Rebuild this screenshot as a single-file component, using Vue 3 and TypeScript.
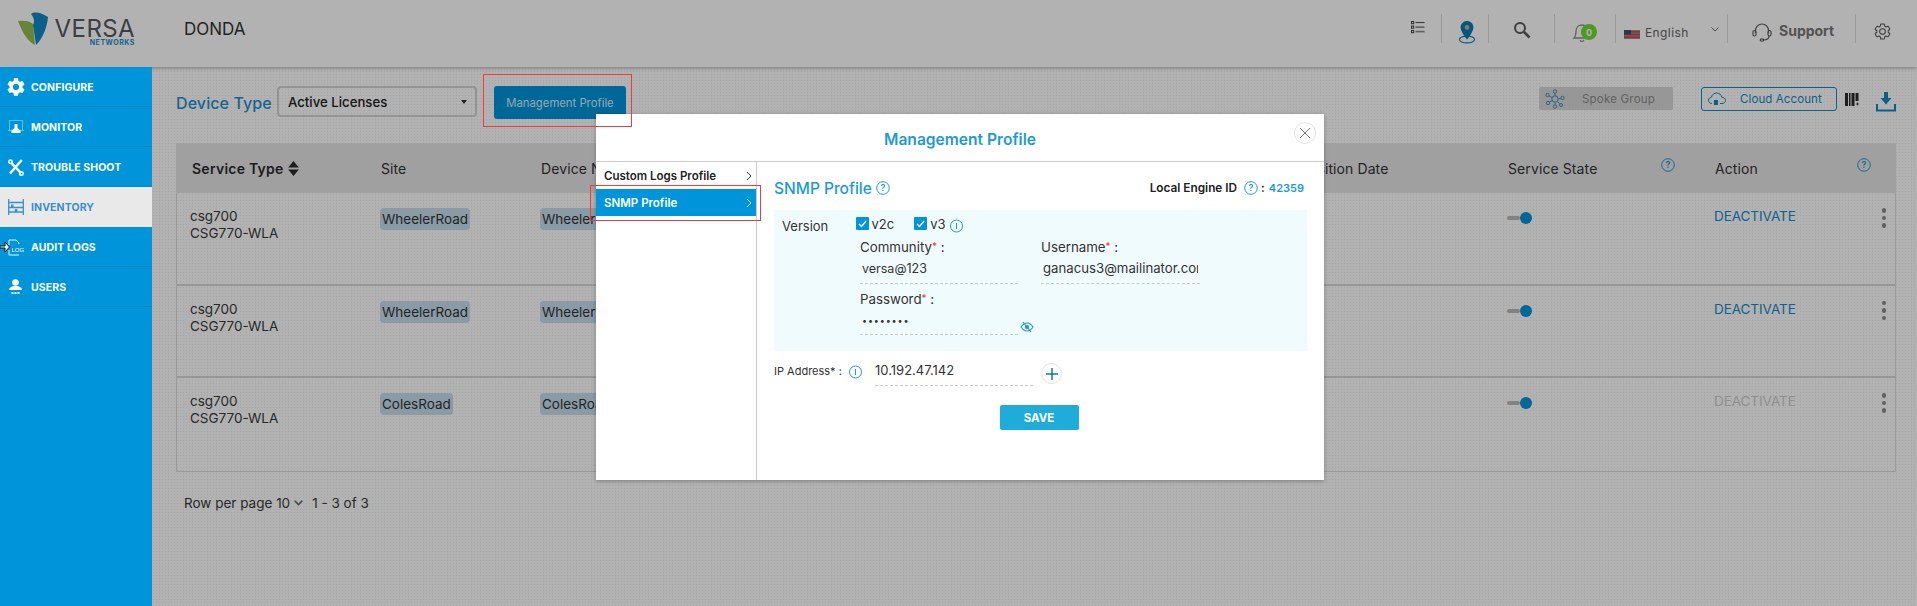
<script setup lang="ts">
interface Row { model: string; site: string; action: boolean }
const nav = [
  { key: 'configure', label: 'CONFIGURE' },
  { key: 'monitor', label: 'MONITOR' },
  { key: 'trouble', label: 'TROUBLE SHOOT' },
  { key: 'inventory', label: 'INVENTORY' },
  { key: 'audit', label: 'AUDIT LOGS' },
  { key: 'users', label: 'USERS' }
]
const rows: Row[] = [
  { model: 'CSG770-WLA', site: 'WheelerRoad', action: true },
  { model: 'CSG770-WLA', site: 'WheelerRoad', action: true },
  { model: 'CSG770-WLA', site: 'ColesRoad', action: false }
]
const gear = 'M19.14 12.94c.04-.3.06-.61.06-.94 0-.32-.02-.64-.07-.94l2.03-1.58a.49.49 0 0 0 .12-.61l-1.92-3.32a.488.488 0 0 0-.59-.22l-2.39.96c-.5-.38-1.03-.7-1.62-.94l-.36-2.54a.484.484 0 0 0-.48-.41h-3.84c-.24 0-.43.17-.47.41l-.36 2.54c-.59.24-1.13.57-1.62.94l-2.39-.96c-.22-.08-.47 0-.59.22L2.74 8.87c-.12.21-.08.47.12.61l2.03 1.58c-.05.3-.09.63-.09.94s.02.64.07.94l-2.03 1.58a.49.49 0 0 0-.12.61l1.92 3.32c.12.22.37.29.59.22l2.39-.96c.5.38 1.03.7 1.62.94l.36 2.54c.05.24.24.41.48.41h3.84c.24 0 .44-.17.47-.41l.36-2.54c.59-.24 1.13-.56 1.62-.94l2.39.96c.22.08.47 0 .59-.22l1.92-3.32c.12-.22.07-.47-.12-.61l-2.01-1.58zM12 15.6c-1.98 0-3.6-1.62-3.6-3.6s1.62-3.6 3.6-3.6 3.6 1.62 3.6 3.6-1.62 3.6-3.6 3.6z'
</script>

<template>
  <div class="page">
    <header class="topbar">
      <div class="logo">
        <svg class="logo-mark" width="31" height="34" viewBox="0 0 31 34">
          <path d="M0 9 C6 8 12 9 15 12 L17 33 C10 30 4 20 0 9Z" fill="#93bf4e" />
          <path d="M13 2 C17 -1 24 1 30 5 C29 16 24 28 18 33 C17 26 16 19 15 13 C17 9 16 6 13 2Z" fill="#0e8ac6" />
        </svg>
        <div class="logo-text">
          <span class="logo-versa">VERSA</span>
          <span class="logo-net">NETWORKS</span>
        </div>
      </div>
      <div class="tenant">DONDA</div>
      <div class="top-tools">
        <div class="tool t-list">
          <svg width="14" height="13" viewBox="0 0 14 13" fill="none" stroke="#444" stroke-width="1">
            <rect x=".5" y=".5" width="2.2" height="2.2" /><rect x=".5" y="5" width="2.2" height="2.2" /><rect x=".5" y="9.5" width="2.2" height="2.2" />
            <path d="M4.5 1.6H13.5M4.5 6.1H13.5" /><path d="M4.5 10.6H13.5" stroke="#888" stroke-width="1.6" />
          </svg>
        </div>
        <div class="tool t-pin">
          <svg width="18" height="24" viewBox="0 0 18 24">
            <ellipse cx="9" cy="19.5" rx="7.6" ry="3.4" fill="none" stroke="#0e7bb0" stroke-width="1.1" />
            <path d="M9 1C5 1 2.6 4 2.6 7.4 2.6 11.6 9 19.5 9 19.5S15.4 11.6 15.4 7.4C15.4 4 13 1 9 1Z" fill="#0e7bb0" />
            <circle cx="9" cy="7.4" r="2.3" fill="#b3b3b3" />
          </svg>
        </div>
        <div class="tool t-search">
          <svg width="18" height="18" viewBox="0 0 18 18" fill="none" stroke="#5a5a5a">
            <circle cx="7" cy="7" r="5" stroke-width="2" /><path d="M11 11l5.5 5.5" stroke-width="2.6" />
          </svg>
        </div>
        <div class="tool t-bell">
          <svg width="22" height="22" viewBox="0 0 22 22" fill="none" stroke="#8d8d8d" stroke-width="1.3">
            <path d="M3 17c2-2 2-4 2-7 0-3.5 2.5-6 6-6s6 2.500 6 6c0 3 0 5 2 7z" /><path d="M9 19.500c1 1 3 1 4 0" />
          </svg>
          <span class="badge">0</span>
        </div>
        <div class="tool t-lang">
          <svg class="flag" width="16" height="9" viewBox="0 0 16 9">
            <rect width="16" height="9" fill="#b8878a" />
            <path d="M0 1.800H16M0 4.500H16M0 7.200H16" stroke="#a84a4c" stroke-width="1.300" />
            <rect width="7" height="4.500" fill="#4a4a72" />
          </svg>
          <span class="lang-text">English</span>
          <svg class="lang-chev" width="8" height="5" viewBox="0 0 8 5" fill="none" stroke="#666" stroke-width="1">
            <path d="M.5.5 4 4 7.500.5" />
          </svg>
        </div>
        <div class="tool t-support">
          <svg width="20" height="20" viewBox="0 0 20 20" fill="none" stroke="#5c5c5c" stroke-width="1.200">
            <path d="M3.500 11V8.500a6.500 6.500 0 0 1 13 0V11" />
            <rect x="1" y="8.500" width="3" height="5.500" rx="1.500" /><rect x="16" y="8.500" width="3" height="5.500" rx="1.500" />
            <path d="M17 14c0 3-3 4-6 4" /><ellipse cx="10" cy="18" rx="1.800" ry="1.100" />
          </svg>
          <span class="support-text">Support</span>
        </div>
        <div class="tool t-gear">
          <svg width="19" height="19" viewBox="0 0 24 24" fill="none" stroke="#555" stroke-width="1.300"><path :d="gear" /></svg>
        </div>
      </div>
    </header>

    <div class="body">
      <aside class="sidebar">
        <div v-for="n in nav" :key="n.key" class="nav-item" :class="{ active: n.key === 'inventory' }">
          <span class="nav-icon">
            <svg v-if="n.key === 'configure'" width="18" height="18" viewBox="2 2 20 20" fill="#fff"><path :d="gear" /></svg>
            <svg v-else-if="n.key === 'monitor'" width="16" height="15" viewBox="0 0 16 15">
              <rect x="1.500" y=".5" width="13" height="10" fill="none" stroke="#7cc8ec" stroke-width=".8" />
              <path d="M0 10.500h2M14 10.500h2" stroke="#7cc8ec" stroke-width=".8" />
              <path d="M6.500 4h3v4l3 2.500v2.500h-9V10.500l3-2.500z" fill="#fff" />
            </svg>
            <svg v-else-if="n.key === 'trouble'" width="16" height="17" viewBox="0 0 16 17" fill="none" stroke="#fff">
              <path d="M13.800 1L2 14.500" stroke-width="2.400" /><circle cx="2.500" cy="2.800" r="1.700" stroke-width="1.500" />
              <path d="M3.500 4.200L13 14" stroke-width="2.400" /><circle cx="13.300" cy="14.500" r="1.800" stroke-width="1.500" />
            </svg>
            <svg v-else-if="n.key === 'inventory'" width="16" height="16" viewBox="0 0 16 16" fill="none" stroke="#3b8fd0" stroke-width="1.300">
              <path d="M.7 0V16M15.300 0V16M.7 3.500H15.300M.7 8.500H15.300M.7 13H15.300" />
              <rect x="3" y="5.500" width="2.500" height="3" fill="#3b8fd0" stroke="none" /><rect x="6.800" y="10" width="2.500" height="3" fill="#3b8fd0" stroke="none" />
            </svg>
            <svg v-else-if="n.key === 'audit'" width="16" height="17" viewBox="0 0 16 17">
              <path d="M1 6V1h7l3 3v1M1 11v5h10" fill="none" stroke="#fff" stroke-width=".9" />
              <text x="3.500" y="12.500" class="log-text">LOG</text>
            </svg>
            <svg v-else width="15" height="16" viewBox="0 0 15 16" fill="#fff">
              <circle cx="7.500" cy="3.500" r="3.300" /><path d="M1 11c0-2.500 3-4 6.500-4s6.500 1.500 6.500 4z" />
              <rect x="3.500" y="13" width="2" height="2" /><rect x="6.500" y="13" width="2" height="2" /><rect x="9.500" y="13" width="2" height="2" />
            </svg>
          </span>
          <span class="nav-label">{{ n.label }}</span>
        </div>
        <svg class="cursor" width="10" height="12" viewBox="0 0 10 12">
          <path d="M0 5h5V1l4.500 5L5 11V7H0z" fill="#fff" stroke="#111" stroke-width="1" />
        </svg>
      </aside>

      <main class="main">
        <div class="toolbar">
          <span class="dt-label">Device Type</span>
          <div class="select">
            <span>Active Licenses</span>
            <i class="caret"></i>
          </div>
          <button class="mp-btn">Management Profile</button>
          <div class="spacer"></div>
          <div class="spoke">
            <svg width="20" height="20" viewBox="0 0 20 20" fill="none" stroke="#3f93bd" stroke-width="1">
              <circle cx="10" cy="10" r="3.200" /><circle cx="10" cy="2.500" r="1.700" /><circle cx="10" cy="17.500" r="1.700" />
              <circle cx="2.500" cy="6" r="1.700" /><circle cx="17.500" cy="9" r="1.700" /><circle cx="3" cy="14" r="1.700" /><circle cx="16" cy="16" r="1.500" />
              <path d="M10 4.200V6.800M10 13.200V15.800M4 7l3.300 1.500M13.200 9.700h2.600M4.500 13l2.900-1.500M12.500 12.500l2.300 2.400" />
            </svg>
            <span>Spoke Group</span>
          </div>
          <div class="cloud">
            <svg width="18" height="14" viewBox="0 0 18 14" fill="none" stroke="#0e8ac6" stroke-width="1">
              <path d="M4 11.500C2 11.500.5 10 .5 8.200.5 6.500 1.800 5.300 3.400 5.200 4 2.500 6.300 1 8.700 1c2.600 0 4.700 1.800 5 4.200 2 .1 3.800 1.200 3.800 3.200S16 11.500 14 11.500h-2" />
              <rect x="6.500" y="8.500" width="3" height="4" fill="#0e8ac6" />
            </svg>
            <span>Cloud Account</span>
          </div>
          <svg class="barcode" width="14" height="15" viewBox="0 0 14 15" fill="#2c2c2c">
            <rect x="0" y="1" width="3" height="13" /><rect x="4" y="1" width="1.500" height="13" /><rect x="6.500" y="1" width="3" height="13" />
            <rect x="10.500" y="1" width="3" height="8" /><path d="M11 12h3M12.500 10.500v3" stroke="#2c2c2c" stroke-width=".8" />
          </svg>
          <svg class="download" width="20" height="20" viewBox="0 0 20 20" fill="#0e8ac6">
            <path d="M8 0h4v6h3.500L10 12.500 4.500 6H8z" />
            <path d="M1 12v6.500h18V12" fill="none" stroke="#0e8ac6" stroke-width="2" />
          </svg>
        </div>

        <section class="table">
          <div class="grid thead">
            <div class="th-service">Service Type
              <svg width="13" height="15" viewBox="0 0 12 14" fill="#2c2c2c"><path d="M6 0l5 6H1zM6 14l5-6H1z" /></svg>
            </div>
            <div class="th-c">Site</div>
            <div class="th-c">Device Name</div>
            <div class="th-c">Acquisition Date</div>
            <div class="th-c th-help">Service State
              <svg class="help" width="14" height="14" viewBox="0 0 14 14" fill="none" stroke="#1d9ad6"><circle cx="7" cy="7" r="6.300" /><text x="7" y="10" class="q-text">?</text></svg>
            </div>
            <div class="th-c th-help">Action
              <svg class="help help-a" width="14" height="14" viewBox="0 0 14 14" fill="none" stroke="#1d9ad6"><circle cx="7" cy="7" r="6.300" /><text x="7" y="10" class="q-text">?</text></svg>
            </div>
          </div>
          <div v-for="(r, i) in rows" :key="i" class="grid trow">
            <div class="td-model"><div>csg700</div><div>{{ r.model }}</div></div>
            <div><span class="chip">{{ r.site }}</span></div>
            <div><span class="chip">{{ r.site }}</span></div>
            <div></div>
            <div class="td-toggle"><span class="track"></span><span class="knob"></span></div>
            <div class="td-action">
              <span class="deact" :class="{ off: !r.action }">DEACTIVATE</span>
              <span class="dots"><i></i><i></i><i></i></span>
            </div>
          </div>
        </section>

        <div class="pager">
          <span>Row per page 10</span>
          <svg width="9" height="6" viewBox="0 0 9 6" fill="none" stroke="#666" stroke-width="1.600"><path d="M.7.7 4.500 4.500 8.300.7" /></svg>
          <span class="pager-range">1 - 3 of 3</span>
        </div>
      </main>
    </div>

    <div class="overlay"></div>

    <div class="modal">
      <div class="modal-head">
        <span class="modal-title">Management Profile</span>
        <span class="close">
          <svg width="12" height="12" viewBox="0 0 12 12" stroke="#777" stroke-width="1"><path d="M1 1l10 10M11 1L1 11" /></svg>
        </span>
      </div>
      <div class="modal-body">
        <div class="tabs">
          <div class="tab">Custom Logs Profile
            <svg width="6" height="10" viewBox="0 0 6 10" fill="none" stroke="#333"><path d="M1 1l4 4-4 4" /></svg>
          </div>
          <div class="tab tab-on">SNMP Profile
            <svg width="6" height="10" viewBox="0 0 6 10" fill="none" stroke="#d6f0fb"><path d="M1 1l4 4-4 4" /></svg>
          </div>
        </div>
        <div class="content">
          <div class="c-head">
            <span class="c-title">SNMP Profile</span>
            <svg class="ic" width="14" height="14" viewBox="0 0 14 14" fill="none" stroke="#1d9ad6"><circle cx="7" cy="7" r="6.300" /><text x="7" y="10" class="q-text b">?</text></svg>
            <div class="spacer"></div>
            <span class="engine">Local Engine ID</span>
            <svg class="ic eng-ic" width="14" height="14" viewBox="0 0 14 14" fill="none" stroke="#1d9ad6"><circle cx="7" cy="7" r="6.300" /><text x="7" y="10" class="q-text b">?</text></svg>
            <span class="engine colon">:</span>
            <span class="engine-id">42359</span>
          </div>
          <div class="panel">
            <div class="ver-row">
              <span class="ver-label">Version</span>
              <span class="check"><svg width="9" height="8" viewBox="0 0 9 8" fill="none" stroke="#fff" stroke-width="1.300"><path d="M1 4l2.500 2.500L8 1" /></svg></span>
              <span class="ck-text">v2c</span>
              <span class="check ck2"><svg width="9" height="8" viewBox="0 0 9 8" fill="none" stroke="#fff" stroke-width="1.300"><path d="M1 4l2.500 2.500L8 1" /></svg></span>
              <span class="ck-text">v3</span>
              <svg class="ic-i" width="13" height="14" viewBox="0 0 13 14" fill="none" stroke="#1d9ad6"><circle cx="6.500" cy="7" r="6" /><path d="M6.500 4v6" /></svg>
            </div>
            <div class="fields">
              <div class="field">
                <label class="f-label">Community<em>*</em> :</label>
                <div class="f-value">versa@123</div>
              </div>
              <div class="field">
                <label class="f-label">Username<em>*</em> :</label>
                <div class="f-value clip"><span>ganacus3@mailinator.com</span></div>
              </div>
              <div class="field">
                <label class="f-label">Password<em>*</em> :</label>
                <div class="f-value pw">••••••••</div>
                <svg class="eye" width="14" height="12" viewBox="0 0 14 12" fill="none" stroke="#1d9ad6" stroke-width="1.200">
                  <path d="M1 6c2-3 4-4 6-4s4 1 6 4c-2 3-4 4-6 4S3 9 1 6z" /><circle cx="7" cy="6" r="1.500" fill="#1d9ad6" /><path d="M3 1l8 10" />
                </svg>
              </div>
            </div>
          </div>
          <div class="ip-row">
            <span class="ip-label">IP Address* :</span>
            <svg class="ic-i" width="13" height="14" viewBox="0 0 13 14" fill="none" stroke="#1d9ad6"><circle cx="6.500" cy="7" r="6" /><path d="M6.500 4v6" /></svg>
            <div class="ip-value">10.192.47.142</div>
            <span class="plus">
              <svg width="12" height="12" viewBox="0 0 12 12" stroke="#1078aa" stroke-width="1.500"><path d="M6 0v12M0 6h12" /></svg>
            </span>
          </div>
          <div class="save-wrap"><button class="save">SAVE</button></div>
        </div>
      </div>
    </div>

    <div class="mark mark-btn"></div>
    <div class="mark mark-tab"></div>
  </div>
</template>

<style>
html, body { margin: 0; padding: 0; background: #fff; overflow: hidden; }
</style>

<style scoped>
* { box-sizing: border-box; }
.page { position: relative; width: 1917px; height: 606px; overflow: hidden; font-family: Inter, "Open Sans", sans-serif; color: #333; background: #fff; }
.spacer { flex: 1; }

.topbar { height: 67px; display: flex; align-items: flex-start; background: #fff; box-shadow: 0 1px 4px rgba(0,0,0,.3); position: relative; }
.logo { width: 184px; display: flex; padding: 12px 0 0 18px; }
.logo-mark { flex: none; }
.logo-text { display: flex; flex-direction: column; align-items: flex-end; margin-left: 5px; width: 81px; }
.logo-versa { font-size: 24px; line-height: 19px; letter-spacing: .4px; color: #565a61; margin-top: 7px; }
.logo-net { font-size: 7px; font-weight: 700; line-height: 8px; letter-spacing: .55px; color: #1c90c9; margin-top: 1px; }
.tenant { font-size: 17px; line-height: 20px; margin-top: 19px; color: #333; width: 1227px; }
.top-tools { flex: 1; display: flex; align-items: flex-start; height: 100%; }
.tool { height: 29px; margin-top: 14px; border-right: 1px solid #ddd; position: relative; display: flex; align-items: center; flex: none; }
.t-list { width: 31px; padding-left: 0; }
.t-list svg { margin-top: -2px; }
.t-pin { width: 47px; padding-left: 16px; }
.t-pin svg { margin-top: 7px; }
.t-search { width: 66px; padding-left: 24px; }
.t-search svg { margin-top: 3px; }
.t-bell { width: 61px; padding-left: 16px; }
.t-bell svg { margin-top: 7px; }
.badge { position: absolute; left: 26px; top: 10px; width: 16px; height: 16px; border-radius: 50%; background: #6fdc32; color: #fff; font-size: 9px; font-weight: 700; display: flex; align-items: center; justify-content: center; }
.t-lang { width: 112px; padding-left: 8px; }
.t-lang .flag { margin-top: 12px; }
.lang-text { font-size: 12px; margin-left: 5px; margin-top: 8px; color: #666; width: 65px; letter-spacing: .4px; }
.t-lang .lang-chev { margin-top: 2px; margin-left: 1px; }
.t-support { width: 128px; padding-left: 24px; }
.t-support svg { margin-top: 7px; }
.support-text { font-size: 14px; font-weight: 700; color: #777; margin-left: 7px; margin-top: 3px; }
.t-gear { border: 0; padding-left: 17px; }
.t-gear svg { margin-top: 5px; }

.body { display: flex; height: 539px; }
.sidebar { position: relative; z-index: 5; width: 152px; flex: none; background: #0095da; }
.nav-item { height: 40px; display: flex; align-items: center; border-bottom: 1px solid #0a85c2; color: #fff; padding-top: 1px; }
.nav-item.active { background: #e9e9e9; color: #3b8fd0; border-bottom-color: #e9e9e9; }
.nav-icon { width: 31px; flex: none; display: flex; justify-content: center; padding-left: 0; }
.nav-label { font-size: 10.500px; font-weight: 700; letter-spacing: .1px; }
.log-text { font-size: 6px; fill: #fff; font-family: "Liberation Sans", sans-serif; }
.cursor { position: absolute; left: 0; top: 174px; }

.main { flex: 1; padding: 19px 21px 0 24px; background-color: #fff; background-image: radial-gradient(#eeeeee .5px, transparent .8px); background-size: 3px 3px; min-width: 0; }
.toolbar { display: flex; align-items: flex-start; height: 33px; }
.dt-label { font-size: 16px; font-weight: 500; color: #1a93cf; margin-top: 7px; width: 101px; letter-spacing: .1px; }
.select { width: 200px; height: 31px; border: 2px solid #d5d5d5; border-radius: 4px; display: flex; align-items: center; justify-content: space-between; padding: 0 8px 0 9px; font-size: 13.200px; font-weight: 500; color: #222; }
.caret { width: 0; height: 0; border-left: 3px solid transparent; border-right: 3px solid transparent; border-top: 4px solid #333; }
.mp-btn { margin-left: 17px; width: 132px; height: 33px; border: 0; border-radius: 3px; background: #0095da; color: #d8eef8; font-family: inherit; font-size: 11.300px; padding: 0; }
.spoke { margin-top: 1px; width: 134px; height: 23px; background: #d8d8d8; border-radius: 2px; display: flex; align-items: center; padding-left: 6px; font-size: 11.500px; color: #8d8d8d; letter-spacing: .2px; }
.spoke span { margin-left: 17px; }
.cloud { margin: 1px 0 0 28px; width: 136px; height: 24px; border: 1px solid #0e8ac6; border-radius: 3px; display: flex; align-items: center; padding-left: 6px; font-size: 11.500px; color: #0e8ac6; letter-spacing: .1px; }
.cloud span { margin-left: 14px; }
.barcode { margin: 6px 0 0 8px; }
.download { margin: 6px 0 0 17px; flex: none; }

.table { margin-top: 24px; border: 1px solid #ddd; border-top: 0; width: 1720px; }
.grid { display: grid; grid-template-columns: 203px 160px 738px 229px 207px 1fr; }
.thead { height: 50px; background: #e5e5e5; align-items: center; font-size: 14px; color: #333; margin-left: -1px; margin-right: -1px; }
.th-service { padding-left: 16px; font-weight: 600; color: #2c2c2c; display: flex; align-items: center; gap: 3px; letter-spacing: .25px; }
.th-c { padding-left: 2px; letter-spacing: .1px; }
.th-help { position: relative; }
.help { position: absolute; left: 155px; top: -2px; }
.help-a { left: 144px; }
.q-text { font-size: 9px; fill: #1d9ad6; stroke: none; text-anchor: middle; font-weight: 600; }
.trow { height: 92.500px; border-bottom: 2px solid #d8d8d8; font-size: 13.500px; color: #333; padding-top: 15px; }
.trow:last-child { border-bottom: 0; }
.td-model { padding-left: 13px; line-height: 17px; color: #3a3a3a; }
.chip { display: inline-block; background: #c6dfee; border-radius: 4px; height: 22px; line-height: 22px; padding: 0 2px; color: #333; }
.td-toggle { position: relative; height: 12px; margin-top: 4px; }
.track { position: absolute; left: 0; top: 4px; width: 13px; height: 4px; border-radius: 2px; background: #bbb; }
.knob { position: absolute; left: 13px; top: 0; width: 12px; height: 12px; border-radius: 50%; background: #0095da; }
.td-action { display: flex; justify-content: space-between; padding-right: 9px; font-size: 13.500px; }
.deact { color: #0f8fcf; letter-spacing: -.05px; }
.deact.off { color: #cfcfcf; }
.dots { display: flex; flex-direction: column; gap: 3px; }
.dots i { width: 4.500px; height: 4.500px; border-radius: 50%; background: #8c8c8c; display: block; }
.pager { margin: 23px 0 0 8px; display: flex; align-items: center; font-size: 13.500px; color: #3a3a3a; }
.pager svg { margin-left: 4px; }
.pager-range { margin-left: 9px; }

.overlay { position: absolute; inset: 0; background: rgba(0,0,0,.3); z-index: 2; }

.modal { position: absolute; left: 596px; top: 114px; width: 728px; height: 366px; background: #fff; z-index: 6; display: flex; flex-direction: column; box-shadow: 0 1px 4px rgba(0,0,0,.3); }
.modal-head { height: 48px; border-bottom: 1px solid #ccc; display: flex; align-items: center; justify-content: center; position: relative; }
.modal-title { font-size: 15.600px; font-weight: 600; color: #1d9ad6; margin-top: 3px; }
.close { position: absolute; right: 8px; top: 8px; width: 22px; height: 22px; border-radius: 50%; border: 1px solid #e4e4e4; display: flex; align-items: center; justify-content: center; }
.modal-body { flex: 1; display: flex; min-height: 0; }
.tabs { width: 161px; flex: none; border-right: 1px solid #ccc; }
.tab { height: 27px; display: flex; align-items: center; justify-content: space-between; padding: 0 4px 0 8px; font-size: 11.500px; font-weight: 600; color: #222; }
.tab-on { background: #0095da; color: #fff; }
.content { flex: 1; padding: 16px 20px 0 17px; min-width: 0; }
.c-head { display: flex; align-items: center; height: 20px; }
.c-title { font-size: 15.500px; font-weight: 500; color: #1d9ad6; }
.ic { margin-left: 4px; }
.engine { font-size: 11.800px; font-weight: 600; color: #222; }
.eng-ic { margin-left: 7px; }
.colon { margin-left: 3px; }
.engine-id { font-size: 11px; font-weight: 600; color: #1d9ad6; margin-left: 4px; }
.panel { margin-top: 12px; height: 141px; margin-right: -3px; background: #f0fbfe; padding: 8px 0 0 8px; }
.ver-row { display: flex; align-items: flex-start; height: 18px; font-size: 13px; color: #333; }
.ver-label { width: 73.500px; font-size: 13px; line-height: 15px; margin-top: 1px; }
.check { width: 13px; height: 13px; background: #0095da; display: flex; align-items: center; justify-content: center; border-radius: 1px; margin-top: -1px; }
.ck2 { margin-left: 20px; }
.ck-text { margin-left: 3px; line-height: 13px; }
.ic-i { margin-left: 4px; flex: none; }
.ver-row .ic-i { margin-top: 1px; }
.fields { display: grid; grid-template-columns: 158px 159px; column-gap: 23px; margin-left: 78px; margin-top: 3px; }
.field { position: relative; height: 52px; }
.f-label { font-size: 13.300px; line-height: 14px; display: block; color: #333; height: 16px; }
.f-label em { color: #e53935; font-style: normal; font-size: 10px; vertical-align: 2px; }
.f-value { height: 29px; padding: 5px 0 0 2px; font-size: 12.500px; line-height: 17px; border-bottom: 1px dashed #ccc; color: #333; white-space: nowrap; overflow: hidden; }
.clip { font-size: 13.200px; }
.clip span { display: block; width: 155px; overflow: hidden; }
.pw { font-size: 9px; letter-spacing: .85px; padding-top: 5px; height: 28px; }
.eye { position: absolute; left: 160px; top: 30px; }
.ip-row { display: flex; align-items: flex-start; margin-top: 10px; height: 34px; }
.ip-label { font-size: 11px; color: #333; margin-top: 3px; width: 75px; line-height: 14px; }
.ip-row .ic-i { margin: 4px 0 0 0; }
.ip-value { width: 158px; height: 25px; margin-left: 13px; border-bottom: 1px dashed #ccc; font-size: 13px; line-height: 18px; color: #333; }
.plus { width: 21px; height: 21px; border-radius: 50%; border: 1px solid #e2e2e2; margin: 2px 0 0 8px; display: flex; align-items: center; justify-content: center; }
.save-wrap { display: flex; justify-content: center; margin-top: 10px; }
.save { width: 79px; height: 25px; border: 0; border-radius: 2px; background: #20acdb; color: #fff; font-family: inherit; font-size: 11.500px; font-weight: 700; padding: 0; }

.mark { position: absolute; border: 1px solid #ee3b3b; z-index: 7; pointer-events: none; }
.mark-btn { left: 483px; top: 74px; width: 149px; height: 53px; }
.mark-tab { left: 590px; top: 185px; width: 171px; height: 36px; }
</style>
